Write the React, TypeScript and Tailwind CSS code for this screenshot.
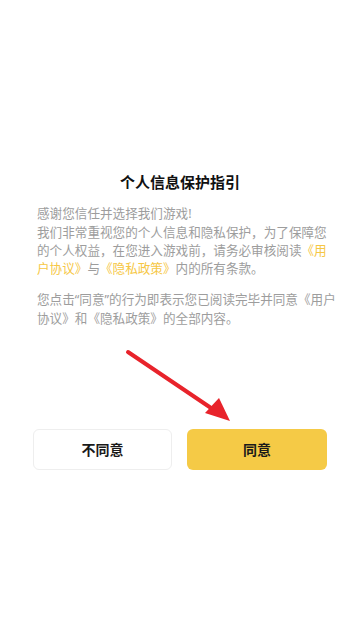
import React from "react";

export default function App() {
  const font = { fontFamily: '"Noto Sans CJK SC", "Noto Sans", sans-serif' };
  const latin = { fontFamily: '"Noto Sans", "Noto Sans CJK SC", sans-serif' };
  return (
    <div
      className="relative w-[360px] h-[640px] bg-white overflow-hidden flex flex-col"
      style={font}
    >
      <div className="pt-[171px] h-[193px] text-center text-[15px] leading-[22px] font-bold text-[#111111]">
        个人信息保护指引
      </div>
      <div className="mt-[11px] px-[37px] text-[12.6px] leading-[18px] text-[#9d9d9d] whitespace-nowrap">
        <p>
          感谢您信任并选择我们游戏<span style={latin}>!</span>
        </p>
        <p>我们非常重视您的个人信息和隐私保护，为了保障您</p>
        <p>
          的个人权益，在您进入游戏前，请务必审核阅读<span className="text-[#f6c744]">《用</span>
        </p>
        <p>
          <span className="text-[#f6c744]">户协议》</span>与<span className="text-[#f6c744]">《隐私政策》</span>内的所有条款。
        </p>
        <p className="mt-[13px]">
          您点击<span style={latin}>“</span>同意<span style={latin}>”</span>的行为即表示您已阅读完毕并同意《用户
        </p>
        <p>协议》和《隐私政策》的全部内容。</p>
      </div>
      <div className="mt-[102px] px-[33px] flex gap-[15px]">
        <button className="w-[139px] h-[41px] rounded-[6px] border border-[#eeeeee] bg-white text-[14px] font-semibold text-[#1a1a1a]">
          不同意
        </button>
        <button className="w-[140px] h-[41px] rounded-[6px] bg-[#f5ca46] text-[14px] font-semibold text-[#1a1a1a]">
          同意
        </button>
      </div>
      <svg
        className="absolute left-0 top-0 pointer-events-none"
        width="360"
        height="640"
        viewBox="0 0 360 640"
      >
        <line x1="128" y1="352" x2="214" y2="410" stroke="#e8232b" strokeWidth="4" strokeLinecap="round" />
        <polygon points="230,421 205,413 219,398" fill="#e8232b" />
      </svg>
    </div>
  );
}
